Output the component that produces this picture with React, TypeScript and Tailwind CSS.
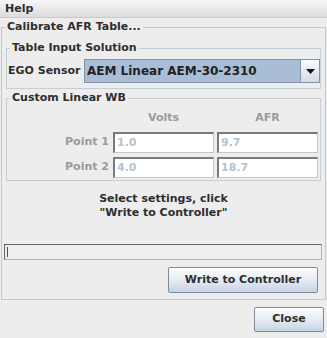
/* Calibrate AFR Table dialog — Swing look */

const font = { fontFamily: '"DejaVu Sans", Verdana, sans-serif' };

function Field({ value }: { value: string }) {
  return (
    <div className="flex h-[21px] w-[101px] items-center border-t-2 border-l-2 border-r border-b border-t-[#7a7a7a] border-l-[#7a7a7a] border-r-[#c6c6c6] border-b-[#c6c6c6] bg-white pl-[2px] text-[11px] text-[#b3c3d3]">
      {value}
    </div>
  );
}

function AquaButton({ label, className }: { label: string; className: string }) {
  return (
    <button
      className={`flex items-center justify-center rounded-[2px] border border-[#7d8b9a] bg-gradient-to-b from-[#fbfcfd] via-[#e6ecf3] to-[#c6d4e3] text-[11px] font-bold text-[#2e2e2e] ${className}`}
    >
      {label}
    </button>
  );
}

export default function App() {
  return (
    <div className="h-[338px] w-[327px] overflow-hidden bg-[#ededed] text-[#2e2e2e]" style={font}>
      {/* Menu bar */}
      <div className="flex h-[18px] items-center border-b border-[#c9c9c9] bg-gradient-to-b from-[#f7f7f7] to-[#dcdcdc] pl-[5px] text-[11px] font-bold leading-none">
        Help
      </div>

      {/* Calibrate AFR Table... */}
      <fieldset className="mt-[2px] ml-[1px] w-[325px] border border-[#bccad8]">
        <legend className="ml-[3px] px-[2px] text-[11px] font-bold leading-[14px]">
          Calibrate AFR Table...
        </legend>
        <div className="px-[2px] pb-[6px] pt-[7px]">
          {/* Table Input Solution */}
          <fieldset className="mx-[2px] border border-[#c3cedb]">
            <legend className="ml-[3px] px-[2px] text-[11px] font-bold leading-[14px]">
              Table Input Solution
            </legend>
            <div className="flex items-center pl-[1px] pt-[4px] pb-[5px]">
              <span className="w-[76px] text-[11px] font-bold">EGO Sensor</span>
              <div className="flex h-[24px] w-[236px] items-center border border-[#8494a5] bg-[#a9bed6]">
                <span className="flex-1 pl-[2px] text-[12px] font-bold text-[#222]">
                  AEM Linear AEM-30-2310
                </span>
                <div className="flex h-full w-[19px] items-center justify-center border-l border-[#8494a5] bg-gradient-to-b from-[#fafbfc] to-[#d3dbe5]">
                  <svg width="9" height="5" viewBox="0 0 9 5">
                    <path d="M0 0h9L4.5 5z" fill="#111" />
                  </svg>
                </div>
              </div>
            </div>
          </fieldset>

          {/* Custom Linear WB */}
          <fieldset className="mx-[2px] mt-[2px] border border-[#c3cedb]">
            <legend className="ml-[3px] px-[2px] text-[11px] font-bold leading-[14px]">
              Custom Linear WB
            </legend>
            <div className="grid grid-cols-[106px_104px_101px] pt-[6px] pb-[2px] text-[11px] font-bold text-[#9a9a9a]">
              <span />
              <span className="w-[101px] text-center leading-[14px]">Volts</span>
              <span className="text-center leading-[14px]">AFR</span>

              <span className="mt-[7px] flex items-center justify-end pr-[4px]">Point 1</span>
              <div className="mt-[7px]"><Field value="1.0" /></div>
              <div className="mt-[7px]"><Field value="9.7" /></div>

              <span className="mt-[4px] flex items-center justify-end pr-[4px]">Point 2</span>
              <div className="mt-[4px]"><Field value="4.0" /></div>
              <div className="mt-[4px]"><Field value="18.7" /></div>
            </div>
          </fieldset>

          {/* Status message */}
          <div className="mt-[11px] text-center text-[11px] font-bold leading-[14px]">
            <div>Select settings, click</div>
            <div>"Write to Controller"</div>
          </div>

          {/* Progress bar */}
          <div className="mt-[24px] flex h-[16px] w-[318px] items-center border-t border-l border-[#666] border-r-[#b0b0b0] border-b-[#b0b0b0] border-r border-b bg-[#eeeeee] pl-[2px]">
            <div className="h-[10px] w-[1px] bg-[#2a55a5]" />
          </div>

          <div className="mt-[7px] flex justify-end pr-[5px]">
            <AquaButton label="Write to Controller" className="h-[26px] w-[150px]" />
          </div>
        </div>
      </fieldset>

      <div className="mt-[7px] flex justify-end pr-[3px]">
        <AquaButton label="Close" className="h-[25px] w-[70px]" />
      </div>
    </div>
  );
}
